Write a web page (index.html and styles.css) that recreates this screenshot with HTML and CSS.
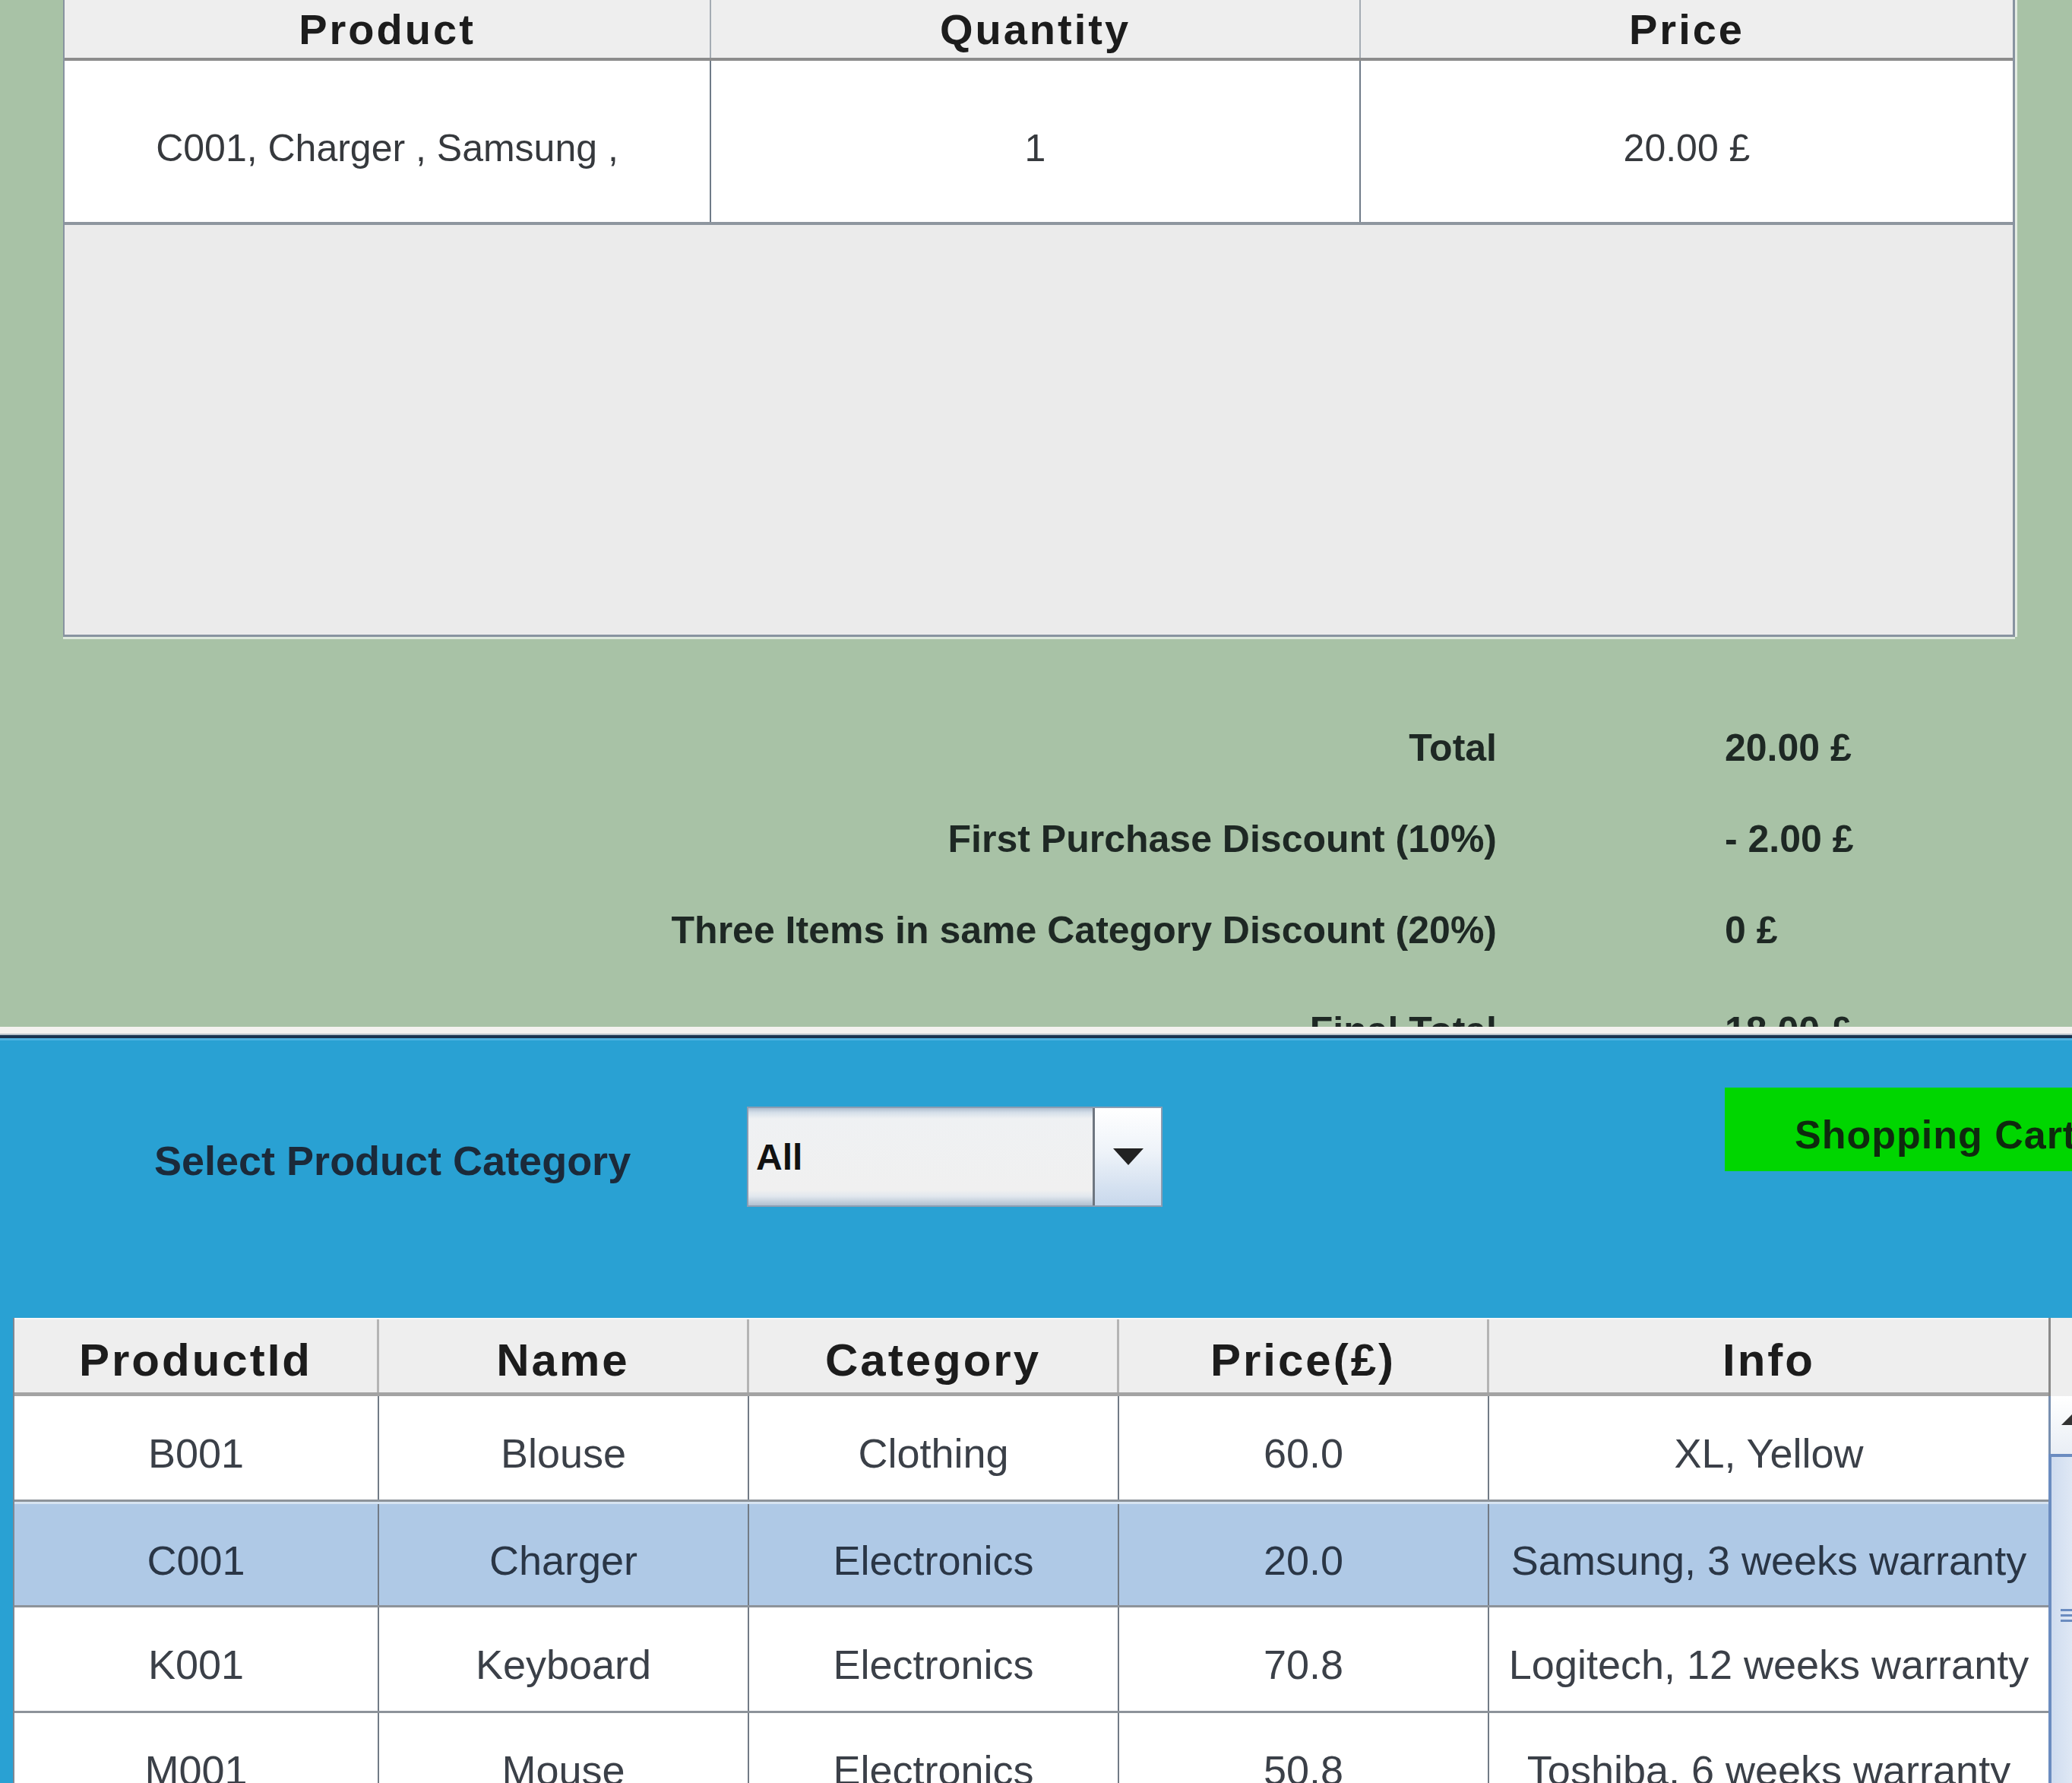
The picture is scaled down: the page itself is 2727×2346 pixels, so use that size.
FILE: index.html
```html
<!DOCTYPE html>
<html lang="en">
<head>
<meta charset="utf-8">
<title>Shop</title>
<link rel="stylesheet" href="styles.css">
</head>
<body>
<div class="screen">
  <section class="cart-panel">
    <div class="cart">
      <div class="cart-head">
        <div class="hc">Product</div>
        <div class="hc">Quantity</div>
        <div class="hc last">Price</div>
      </div>
      <div class="cart-row">
        <div class="bc">C001, Charger , Samsung ,</div>
        <div class="bc">1</div>
        <div class="bc last">20.00 £</div>
      </div>
    </div>
    <div class="totals">
      <div class="tl">Total</div><div class="tv">20.00 £</div>
      <div class="tl">First Purchase Discount (10%)</div><div class="tv">- 2.00 £</div>
      <div class="tl">Three Items in same Category Discount (20%)</div><div class="tv">0 £</div>
      <div class="tl final">Final Total</div><div class="tv final">18.00 £</div>
    </div>
  </section>
  <div class="divider"></div>
  <section class="shop-panel">
    <div class="controls">
      <div class="cat-label">Select Product Category</div>
      <div class="combo">
        <div class="combo-value">All</div>
        <div class="combo-btn">
          <svg class="combo-arrow" viewBox="0 0 40 22" width="40" height="22"><polygon points="0,0 40,0 20,22" fill="#222"/></svg>
        </div>
      </div>
      <div class="cart-btn">Shopping Cart</div>
    </div>
    <div class="products">
      <div class="ptable">
        <div class="prow phead">
          <div class="ph">ProductId</div>
          <div class="ph">Name</div>
          <div class="ph">Category</div>
          <div class="ph">Price(£)</div>
          <div class="ph last">Info</div>
        </div>
        <div class="prow">
          <div class="pc">B001</div><div class="pc">Blouse</div><div class="pc">Clothing</div><div class="pc">60.0</div><div class="pc last">XL, Yellow</div>
        </div>
        <div class="prow sel">
          <div class="pc">C001</div><div class="pc">Charger</div><div class="pc">Electronics</div><div class="pc">20.0</div><div class="pc last">Samsung, 3 weeks warranty</div>
        </div>
        <div class="prow">
          <div class="pc">K001</div><div class="pc">Keyboard</div><div class="pc">Electronics</div><div class="pc">70.8</div><div class="pc last">Logitech, 12 weeks warranty</div>
        </div>
        <div class="prow">
          <div class="pc">M001</div><div class="pc">Mouse</div><div class="pc">Electronics</div><div class="pc">50.8</div><div class="pc last">Toshiba, 6 weeks warranty</div>
        </div>
      </div>
      <div class="vscroll">
        <div class="vs-corner"></div>
        <div class="vs-up">
          <svg class="vs-arrow" viewBox="0 0 40 20" width="40" height="20"><polygon points="0,20 20,0 40,20" fill="#333"/></svg>
        </div>
        <div class="vs-thumb">
          <div class="grip"><span></span><span></span><span></span></div>
        </div>
      </div>
    </div>
  </section>
</div>
</body>
</html>
```

FILE: styles.css
```css
html, body {
  margin: 0;
  padding: 0;
  overflow: hidden;
  background: #29a1d3;
}

.screen {
  width: 2727px;
  height: 2346px;
  overflow: hidden;
  font-family: "Liberation Sans", Arial, sans-serif;
  display: flex;
  flex-direction: column;
}

/* ---------- cart (green) panel ---------- */
.cart-panel {
  height: 1351px;
  flex: 0 0 1351px;
  overflow: hidden;
  background: #a8c2a6;
}

.cart {
  margin-left: 83px;
  width: 2569px;
  height: 838px;
  box-sizing: border-box;
  background: #ebebeb;
  border-left: 2px solid #8893a0;
  border-right: 3px solid #8893a0;
  border-bottom: 3px solid #8893a0;
  box-shadow: 0 3px 0 #dde8dc, 3px 0 0 #e4ece2;
}

.cart-head,
.cart-row {
  display: grid;
  grid-template-columns: 851px 855px 1fr;
}

.cart-head {
  height: 80px;
  box-sizing: border-box;
  background: #eeeeee;
  border-bottom: 4px solid #8c8c8c;
}

.hc {
  display: flex;
  align-items: center;
  justify-content: center;
  border-right: 2px solid #a4abb3;
  font-weight: bold;
  font-size: 56px;
  letter-spacing: 3px;
  color: #1c1c1c;
}

.cart-row {
  height: 216px;
  box-sizing: border-box;
  background: #ffffff;
  border-bottom: 4px solid #8e969f;
}

.bc {
  display: flex;
  align-items: center;
  justify-content: center;
  padding-top: 18px;
  border-right: 2px solid #6f7b88;
  font-size: 50px;
  color: #36393d;
}

.hc.last,
.bc.last {
  border-right: none;
}

.totals {
  display: grid;
  grid-template-columns: 1970px max-content;
  column-gap: 300px;
  margin-top: 86px;
  font-weight: bold;
  font-size: 50px;
  line-height: 120px;
  color: #1e2824;
}

.tl {
  text-align: right;
}

.final {
  padding-top: 12px;
}

/* ---------- divider ---------- */
.divider {
  flex: 0 0 18px;
  background: linear-gradient(to bottom,
    #f4f2ef 0, #f4f2ef 9px,
    #b9c2ca 9px, #b9c2ca 11px,
    #1a3450 11px, #1a3450 15px,
    #4eb2e0 15px, #4eb2e0 18px);
}

/* ---------- shop (blue) panel ---------- */
.shop-panel {
  flex: 1;
  background: #29a1d3;
}

.controls {
  height: 365px;
  display: flex;
  align-items: flex-start;
  padding-left: 203px;
}

.cat-label {
  flex: 0 0 780px;
  margin-top: 128px;
  line-height: 60px;
  font-weight: bold;
  font-size: 54px;
  color: #1b2a3a;
}

.combo {
  flex: 0 0 547px;
  height: 132px;
  margin-top: 87px;
  box-sizing: border-box;
  display: flex;
  border: 2px solid #8b9db2;
  background: linear-gradient(to bottom,
    #aebdcf 0, #d5dfe9 6px, #eff1f3 14px,
    #f0f0f0 calc(100% - 20px), #e1e7ee calc(100% - 12px), #b1c0d0 100%);
}

.combo-value {
  flex: 1;
  display: flex;
  align-items: center;
  padding-left: 10px;
  font-weight: bold;
  font-size: 48px;
  color: #111;
}

.combo-btn {
  flex: 0 0 87px;
  display: flex;
  align-items: center;
  justify-content: center;
  border-left: 3px solid #6e7680;
  background: linear-gradient(to bottom, #ffffff 0, #eef3f9 45%, #c8d8ec 100%);
}

.cart-btn {
  flex: 0 0 500px;
  height: 110px;
  margin-top: 62px;
  margin-left: 740px;
  box-sizing: border-box;
  padding-left: 92px;
  padding-top: 14px;
  display: flex;
  align-items: center;
  background: #00d600;
  font-weight: bold;
  font-size: 52px;
  letter-spacing: 1px;
  color: #0e2a0e;
  white-space: nowrap;
}

/* ---------- product table ---------- */
.products {
  display: flex;
  padding-left: 17px;
}

.ptable {
  flex: 0 0 2679px;
  box-sizing: border-box;
  border-left: 2px solid #7f8893;
  background: #ffffff;
}

.prow {
  display: grid;
  grid-template-columns: 480px 487px 487px 487px 1fr;
  height: 139px;
  box-sizing: border-box;
  border-bottom: 3px solid #8d939a;
  background: #ffffff;
}

.prow.sel {
  background: #afc9e6;
  border-top: 3px solid #d6e3f1;
}

.phead {
  height: 103px;
  background: #eeeeee;
  border-top: 2px solid #f8f8f8;
  border-bottom: 5px solid #a3a3a3;
}

.ph {
  display: flex;
  align-items: center;
  justify-content: center;
  padding-top: 10px;
  border-right: 3px solid #b4b4b4;
  font-weight: bold;
  font-size: 60px;
  letter-spacing: 3px;
  color: #1c1c1c;
}

.pc {
  display: flex;
  align-items: center;
  justify-content: center;
  padding-top: 14px;
  border-right: 2px solid #727b86;
  font-size: 54px;
  color: #3b4048;
  white-space: nowrap;
}

.sel .pc {
  color: #2a3646;
}

.ph.last,
.pc.last {
  border-right: none;
}

/* ---------- scrollbar ---------- */
.vscroll {
  flex: 0 0 50px;
  display: flex;
  flex-direction: column;
  height: 620px;
}

.vs-corner {
  height: 103px;
  background: #eeeeee;
  border-left: 3px solid #8a8a8a;
  box-sizing: border-box;
}

.vs-up {
  height: 76px;
  box-sizing: border-box;
  background: linear-gradient(to bottom, #ffffff, #e9eef5);
  border-left: 3px solid #7990b0;
  padding: 18px 0 0 14px;
}

.vs-arrow {
  display: block;
}

.vs-thumb {
  flex: 1;
  box-sizing: border-box;
  border-left: 4px solid #6b8cc0;
  border-top: 4px solid #6b8cc0;
  background: linear-gradient(to right, #cfdcef, #eef3fa);
  padding-top: 200px;
  padding-left: 12px;
}

.grip span {
  display: block;
  width: 18px;
  height: 3px;
  margin-bottom: 4px;
  background: #6b8cc0;
}
```
